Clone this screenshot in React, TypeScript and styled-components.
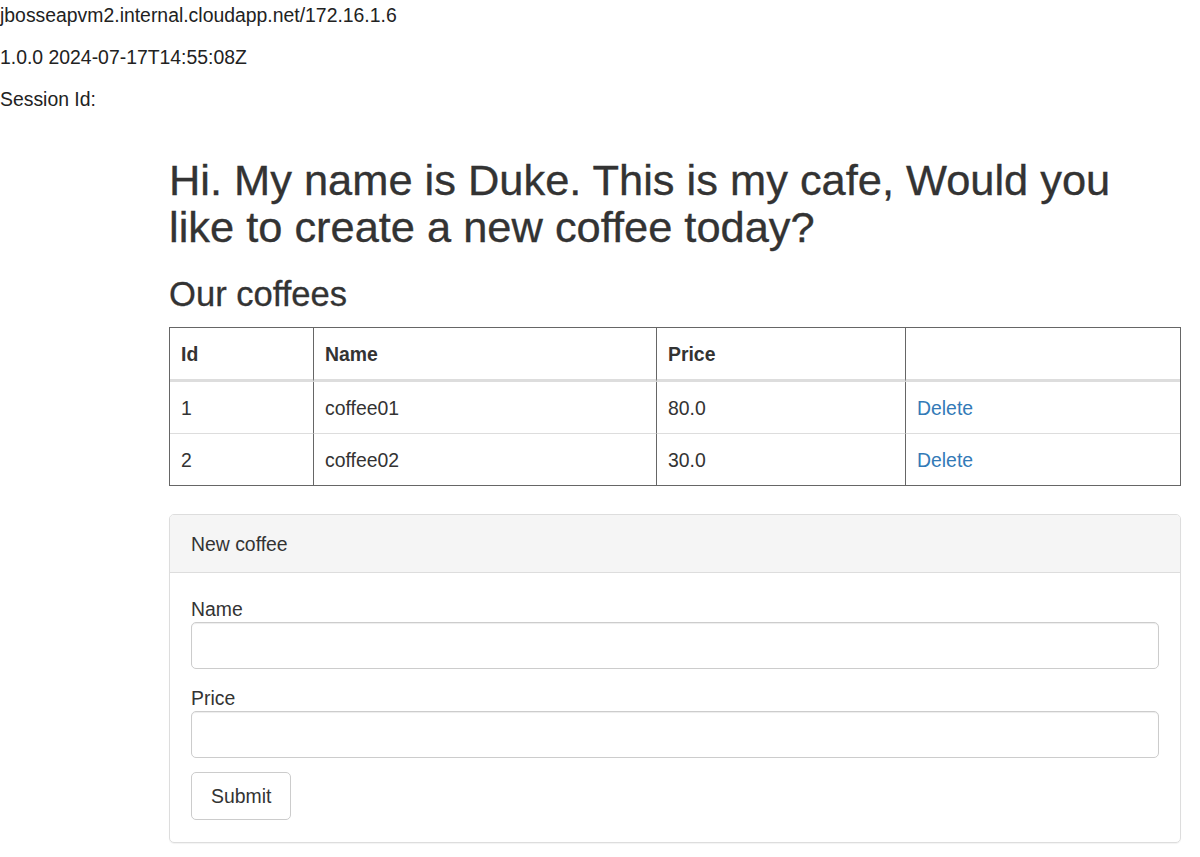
import { createGlobalStyle } from "styled-components";
import styled from "styled-components";

type Coffee = {
	id: number,
	name: string,
	price: string,
}

const coffees: Coffee[] = [
	{ id: 1, name: "coffee01", price: "80.0" },
	{ id: 2, name: "coffee02", price: "30.0" },
];

export default function App() {
	return (
		<>
			<GlobalStyle />
			<ServerInfo>
				<InfoLine>jbosseapvm2.internal.cloudapp.net/172.16.1.6</InfoLine>
				<InfoLine>1.0.0 2024-07-17T14:55:08Z</InfoLine>
				<InfoLine>Session Id:</InfoLine>
			</ServerInfo>
			<Content>
				<Title>Hi. My name is Duke. This is my cafe, Would you like to create a new coffee today?</Title>
				<SubTitle>Our coffees</SubTitle>
				<CoffeeTable>
					<colgroup>
						<Col width={143} />
						<Col width={343} />
						<Col width={249} />
						<col />
					</colgroup>
					<thead>
						<tr>
							<HeadCell>Id</HeadCell>
							<HeadCell>Name</HeadCell>
							<HeadCell>Price</HeadCell>
							<HeadCell></HeadCell>
						</tr>
					</thead>
					<tbody>
						{coffees.map((coffee) => (
							<Row key={coffee.id}>
								<Cell>{coffee.id}</Cell>
								<Cell>{coffee.name}</Cell>
								<Cell>{coffee.price}</Cell>
								<Cell><DeleteLink href="#">Delete</DeleteLink></Cell>
							</Row>
						))}
					</tbody>
				</CoffeeTable>
				<Panel>
					<PanelHeading>New coffee</PanelHeading>
					<PanelBody>
						<FormGroup>
							<Label htmlFor="name">Name</Label>
							<Input id="name" type="text" />
						</FormGroup>
						<FormGroup>
							<Label htmlFor="price">Price</Label>
							<Input id="price" type="text" />
						</FormGroup>
						<Button type="button">Submit</Button>
					</PanelBody>
				</Panel>
			</Content>
		</>
	);
}

const GlobalStyle = createGlobalStyle`
	* {
		box-sizing: border-box;
	}
	body {
		margin: 0;
		font-family: "Liberation Sans", Arial, sans-serif;
		font-size: 19.4px;
		line-height: 28px;
		color: #333;
		background: #fff;
	}
`

const ServerInfo = styled.div`
	padding-top: 1px;
`

const InfoLine = styled.p`
	margin: 0 0 14px;
	color: #222;
`

const Content = styled.div`
	padding: 30px 19px 0 169px;
`

const Title = styled.h2`
	margin: 0 0 14px;
	font-size: 43.4px;
	font-weight: 500;
	line-height: 47px;
	color: #333;
	-webkit-text-stroke: 0.35px #333;
`

const SubTitle = styled.h3`
	margin: 25px 0 14px;
	font-size: 34.6px;
	font-weight: 500;
	line-height: 37px;
	color: #333;
	-webkit-text-stroke: 0.3px #333;
`

const CoffeeTable = styled.table`
	width: 100%;
	table-layout: fixed;
	border-collapse: separate;
	border-spacing: 0;
	border: 1px solid #666;
	margin-bottom: 28px;
`

const Col = styled.col<{ width: number }>`
	width: ${props => props.width}px;
`

const HeadCell = styled.th`
	text-align: left;
	font-weight: bold;
	padding: 12px 11px 11px;
	line-height: 28px;
	border-bottom: 3px solid #ddd;
	&:not(:first-child) {
		border-left: 1px solid #666;
	}
`

const Row = styled.tr`
	&:not(:first-child) td {
		border-top: 1px solid #ddd;
	}
`

const Cell = styled.td`
	padding: 12px 11px 11px;
	line-height: 28px;
	&:not(:first-child) {
		border-left: 1px solid #666;
	}
`

const DeleteLink = styled.a`
	color: #337ab7;
	text-decoration: none;
`

const Panel = styled.div`
	border: 1px solid #ddd;
	border-radius: 5px;
	box-shadow: 0 1px 1px rgba(0, 0, 0, 0.05);
	margin-bottom: 20px;
`

const PanelHeading = styled.div`
	background: #f5f5f5;
	border-bottom: 1px solid #ddd;
	border-radius: 4px 4px 0 0;
	padding: 15px 21px 14px;
	color: #333;
`

const PanelBody = styled.div`
	padding: 27px 21px 22px;
`

const FormGroup = styled.div`
	margin-bottom: 14px;
	& + & {
		margin-top: 20px;
	}
`

const Label = styled.label`
	display: block;
	line-height: 18px;
	margin-bottom: 4px;
`

const Input = styled.input`
	display: block;
	width: 100%;
	height: 47px;
	padding: 8px 17px;
	font: inherit;
	border: 1px solid #ccc;
	border-radius: 5px;
	box-shadow: inset 0 1px 1px rgba(0, 0, 0, 0.075);
	background: #fff;
`

const Button = styled.button`
	height: 48px;
	padding: 0 19px;
	font: inherit;
	color: #333;
	background: #fff;
	border: 1px solid #ccc;
	border-radius: 5px;
	cursor: pointer;
`
